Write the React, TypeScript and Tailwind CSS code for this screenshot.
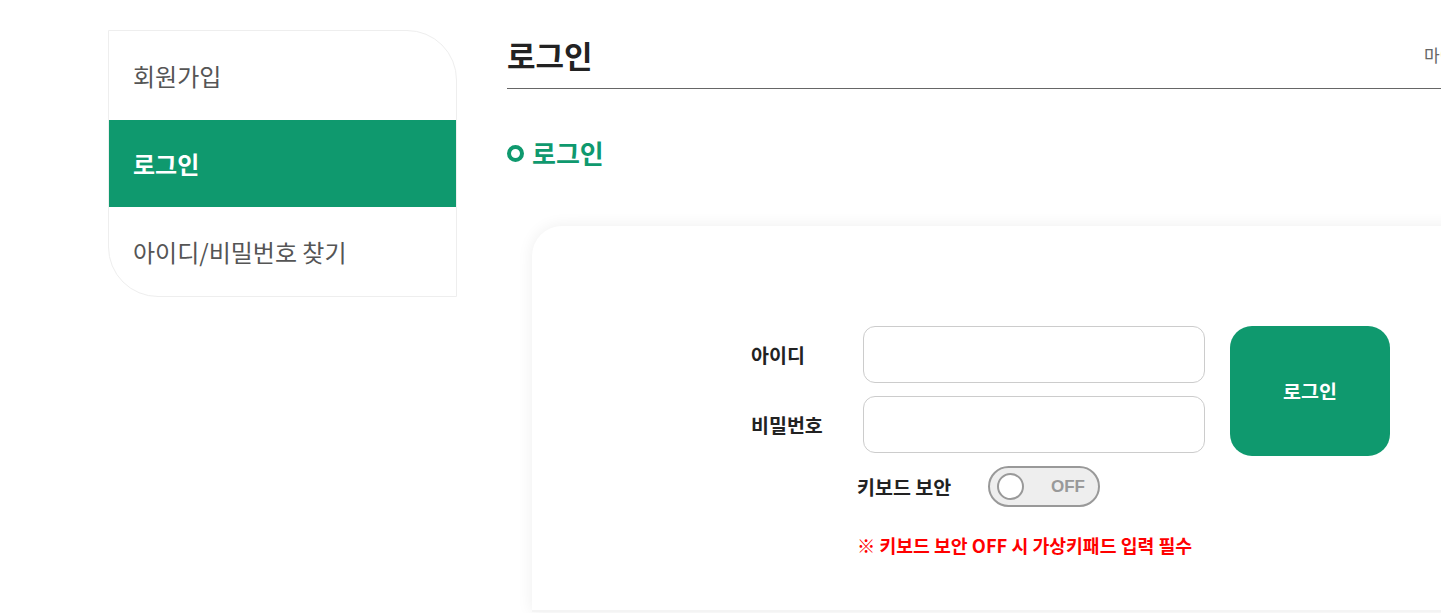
import React from "react";

const font = { fontFamily: '"Noto Sans CJK KR", "Noto Sans", sans-serif' };

const menu = [
  { label: "회원가입", active: false },
  { label: "로그인", active: true },
  { label: "아이디/비밀번호 찾기", active: false },
];

const Sidebar = () => {
  return (
    <div className="w-[349px] shrink-0 h-[267px] border border-[#eeeeee] rounded-tr-[50px] rounded-bl-[50px] overflow-hidden bg-white">
      {menu.map((m) => (
        <div
          key={m.label}
          className={
            m.active
              ? "h-[87px] flex items-center pl-[24px] bg-[#0f996e] text-white font-bold text-[24px]"
              : "h-[89px] flex items-center pl-[24px] text-[#555555] text-[24px]"
          }
        >
          {m.label}
        </div>
      ))}
    </div>
  );
};

const App = () => {
  return (
    <div className="h-[613px] w-full overflow-hidden bg-white" style={font}>
      <div className="flex pl-[108px] pt-[30px] w-[1700px]">
        <Sidebar />

        <div className="ml-[50px] w-[1100px] shrink-0">
          <div className="flex items-center border-b border-[#666666] pb-[8px]">
            <h2 className="w-[917px] leading-[50px] text-[31px] font-bold text-[#222222]">
              로그인
            </h2>
            <span className="text-[17px] text-[#666666] whitespace-nowrap">
              마이페이지 &gt; 로그인
            </span>
          </div>

          <div className="mt-[47px] flex items-center gap-[8px] h-[34px]">
            <span className="w-[17px] h-[17px] rounded-full border-[4px] border-[#0f996e]" />
            <h3 className="text-[26px] font-bold text-[#0f996e] leading-[34px]">
              로그인
            </h3>
          </div>

          <div className="mt-[56px] ml-[25px] h-[386px] bg-white rounded-tl-[30px] shadow-[0_0_16px_rgba(0,0,0,0.07)] border-b-2 border-[#f4f4f4] pt-[100px] pl-[219px]">
            <div className="flex">
              <div className="flex flex-col gap-[13px]">
                <div className="flex items-center">
                  <label className="w-[112px] text-[19.5px] font-bold text-[#222222]">
                    아이디
                  </label>
                  <input className="w-[342px] h-[57px] rounded-[12px] border border-[#cccccc] px-4 outline-none" />
                </div>
                <div className="flex items-center">
                  <label className="w-[112px] text-[19.5px] font-bold text-[#222222]">
                    비밀번호
                  </label>
                  <input
                    type="password"
                    className="w-[342px] h-[57px] rounded-[12px] border border-[#cccccc] px-4 outline-none"
                  />
                </div>
              </div>
              <button className="ml-[25px] w-[160px] h-[130px] rounded-[22px] bg-[#0f996e] text-white text-[19.5px] font-bold">
                로그인
              </button>
            </div>

            <div className="ml-[106px] mt-[10px] flex items-center">
              <span className="w-[131px] text-[19.5px] font-bold text-[#222222]">
                키보드 보안
              </span>
              <div className="w-[112px] h-[41px] rounded-full border-2 border-[#999999] bg-[#eeeeee] flex items-center pl-[7px] pr-[13px] justify-between">
                <span className="w-[27px] h-[27px] rounded-full bg-white border-2 border-[#999999]" />
                <span
                  className="text-[17px] font-bold text-[#999999]"
                  style={{ fontFamily: '"Liberation Sans", Arial, sans-serif' }}
                >
                  OFF
                </span>
              </div>
            </div>

            <p className="ml-[106px] mt-[25px] text-[18.3px] font-bold text-[#ff0000] leading-[26px]">
              ※ 키보드 보안 OFF 시 가상키패드 입력 필수
            </p>
          </div>
        </div>
      </div>
    </div>
  );
};

export default App;
